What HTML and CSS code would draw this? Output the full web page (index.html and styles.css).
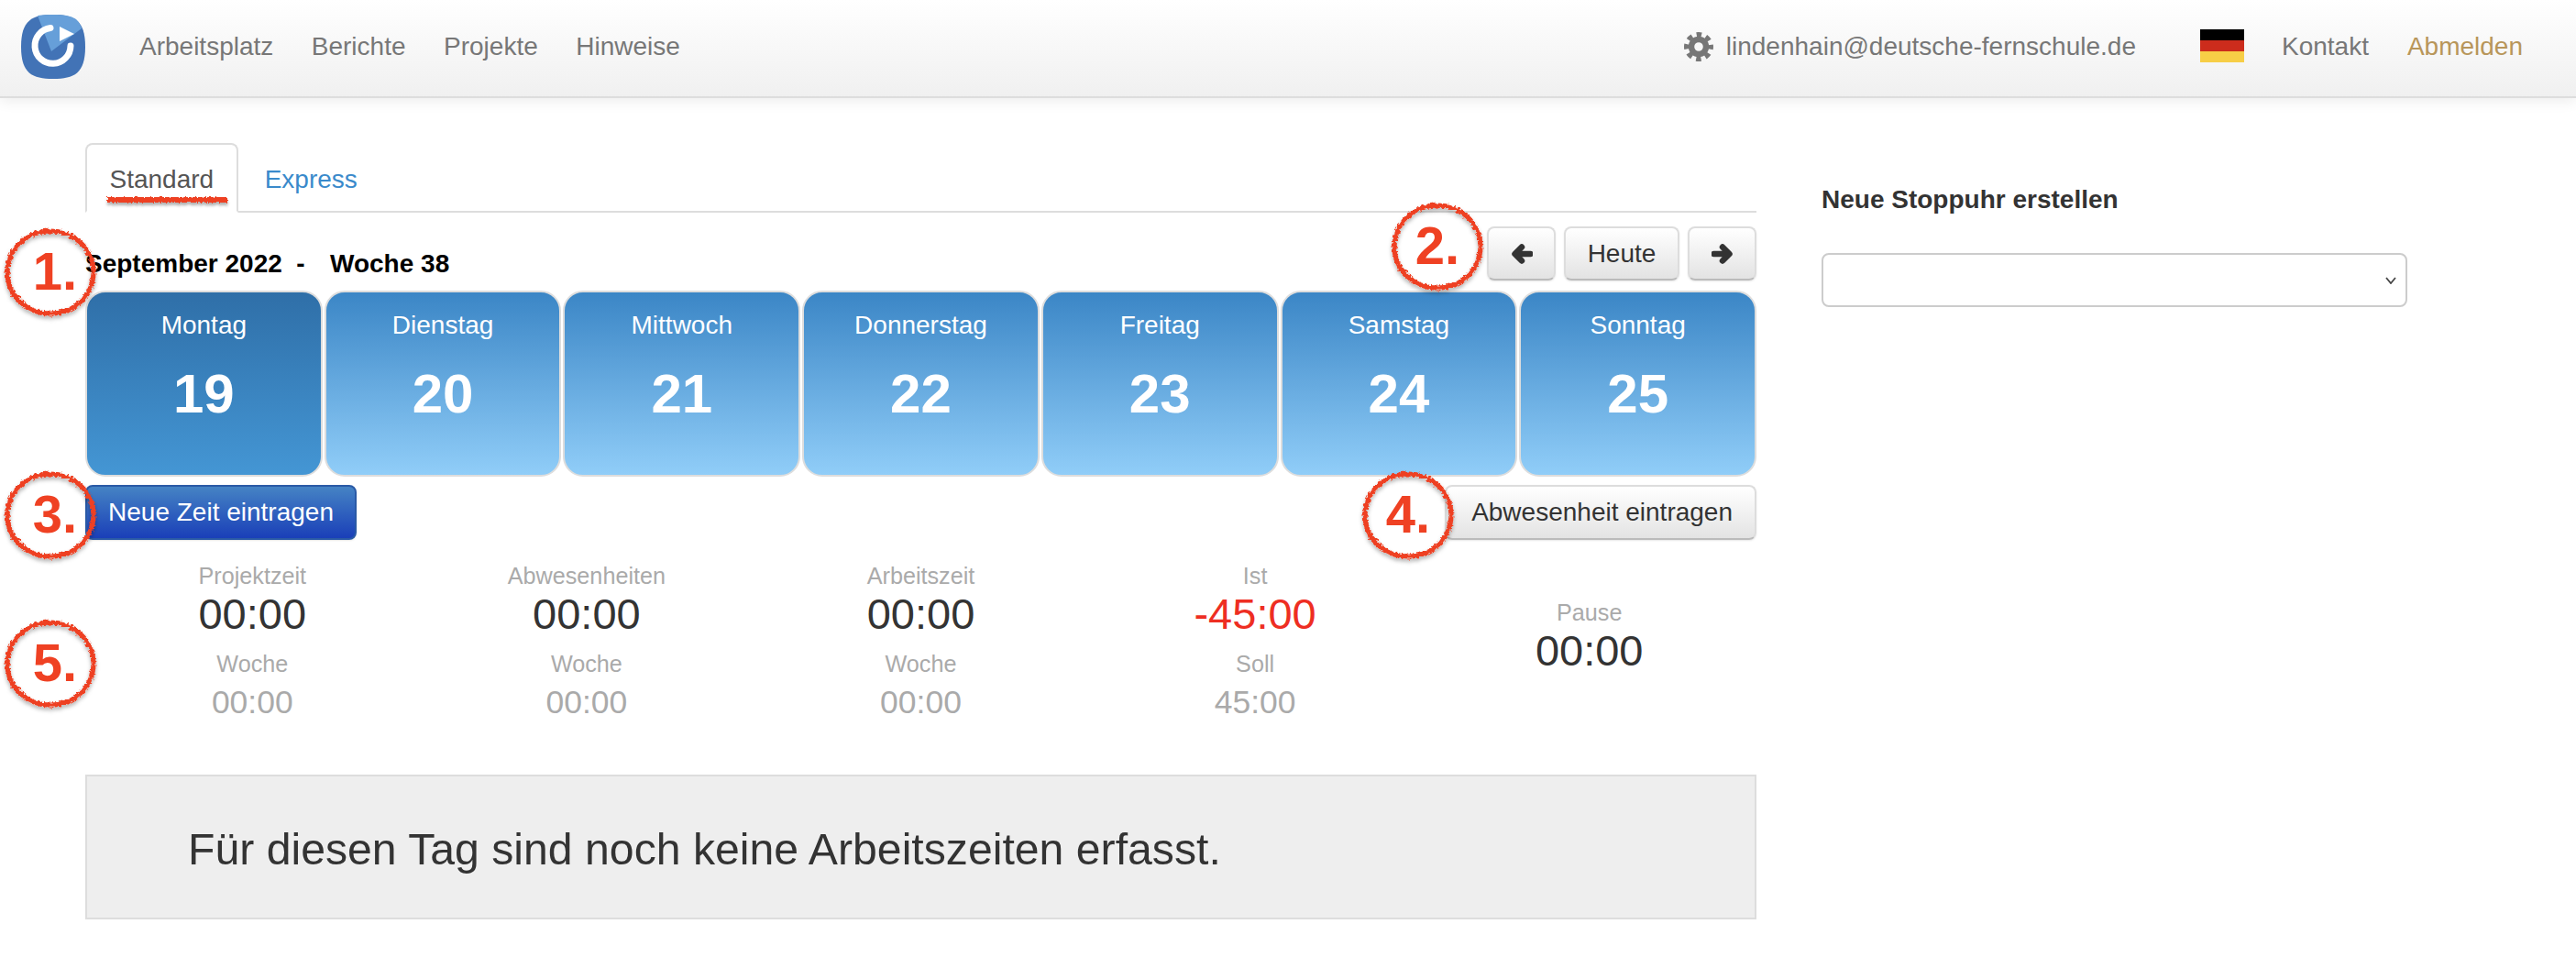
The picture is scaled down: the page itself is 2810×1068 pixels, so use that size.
FILE: index.html
```html
<!DOCTYPE html>
<html lang="de">
<head>
<meta charset="utf-8">
<title>Arbeitsplatz</title>
<link rel="stylesheet" href="styles.css">
</head>
<body>
<svg class="defs" width="0" height="0" aria-hidden="true">
  <defs>
    <filter id="rough" x="-20%" y="-20%" width="140%" height="150%">
      <feTurbulence type="fractalNoise" baseFrequency="0.35" numOctaves="3" seed="4" result="n"/>
      <feDisplacementMap in="SourceGraphic" in2="n" scale="5" xChannelSelector="R" yChannelSelector="G" result="d"/>
      <feDropShadow in="d" dx="0" dy="3" stdDeviation="2" flood-color="#000" flood-opacity="0.3"/>
    </filter>
    <filter id="roughline" filterUnits="userSpaceOnUse" x="-10" y="-10" width="160" height="34">
      <feTurbulence type="fractalNoise" baseFrequency="0.5" numOctaves="3" seed="7" result="n"/>
      <feDisplacementMap in="SourceGraphic" in2="n" scale="4" xChannelSelector="R" yChannelSelector="G" result="d"/>
      <feDropShadow in="d" dx="0" dy="3" stdDeviation="1.5" flood-color="#000" flood-opacity="0.3"/>
    </filter>
  </defs>
</svg>
<header class="topbar">
  <svg class="logo" viewBox="0 0 70 70" width="70" height="70">
    <path d="M35 0C58 0 70 6 70 35S58 70 35 70 0 64 0 35 12 0 35 0Z" fill="#4273b6"/>
    <path d="M18 1C24 0 29 0 35 0 46 0 54 1 60 5 63 8 65 11 66 15L33 40Z" fill="#669fd9"/>
    <path d="M32 14.5A19.5 19.5 0 1 0 54 34" fill="none" stroke="#fff" stroke-width="7" stroke-linecap="round"/>
    <path d="M42 13L58 21 42 29Z" fill="#fff"/>
  </svg>
  <nav class="mainnav">
    <a class="navlink">Arbeitsplatz</a>
    <a class="navlink">Berichte</a>
    <a class="navlink">Projekte</a>
    <a class="navlink">Hinweise</a>
  </nav>
  <div class="usernav">
    <svg class="gear" viewBox="0 0 32 32" width="32" height="32">
      <circle cx="16" cy="16" r="8" fill="none" stroke="#777" stroke-width="6.4"/>
      <circle class="gearteeth" cx="16" cy="16" r="13.4" fill="none" stroke="#777" stroke-width="5.2"/>
    </svg>
    <a class="navlink email">lindenhain@deutsche-fernschule.de</a>
    <span class="flag"><i class="fb"></i><i class="fr"></i><i class="fy"></i></span>
    <a class="navlink kontakt">Kontakt</a>
    <a class="navlink logout">Abmelden</a>
  </div>
</header>

<main class="page">
  <section class="leftcol">
    <div class="tabs">
      <a class="tab active">Standard</a>
      <a class="tab">Express</a>
    </div>
    <div class="weekrow">
      <h2 class="weektitle">September 2022&nbsp; <span class="dash">-</span>&nbsp;&nbsp; Woche 38</h2>
      <div class="weekbtns">
        <button class="btn btn-icon"><svg viewBox="0 0 24 24" width="24" height="24"><path class="arrow" d="M12 4.5L4.5 12 12 19.5M5 12H21.5"/></svg></button>
        <button class="btn btn-today">Heute</button>
        <button class="btn btn-icon"><svg viewBox="0 0 24 24" width="24" height="24"><path class="arrow" d="M12 4.5L19.5 12 12 19.5M19 12H2.5"/></svg></button>
      </div>
    </div>
    <div class="days">
      <div class="day current"><span class="dayname">Montag</span><span class="daynum">19</span></div>
      <div class="day"><span class="dayname">Dienstag</span><span class="daynum">20</span></div>
      <div class="day"><span class="dayname">Mittwoch</span><span class="daynum">21</span></div>
      <div class="day"><span class="dayname">Donnerstag</span><span class="daynum">22</span></div>
      <div class="day"><span class="dayname">Freitag</span><span class="daynum">23</span></div>
      <div class="day"><span class="dayname">Samstag</span><span class="daynum">24</span></div>
      <div class="day"><span class="dayname">Sonntag</span><span class="daynum">25</span></div>
    </div>
    <div class="actions">
      <button class="btn btn-primary">Neue Zeit eintragen</button>
      <button class="btn btn-absence">Abwesenheit eintragen</button>
    </div>
    <div class="stats">
      <div class="stat"><span class="label">Projektzeit</span><span class="value">00:00</span><span class="label sub">Woche</span><span class="value small">00:00</span></div>
      <div class="stat"><span class="label">Abwesenheiten</span><span class="value">00:00</span><span class="label sub">Woche</span><span class="value small">00:00</span></div>
      <div class="stat"><span class="label">Arbeitszeit</span><span class="value">00:00</span><span class="label sub">Woche</span><span class="value small">00:00</span></div>
      <div class="stat"><span class="label">Ist</span><span class="value negative">-45:00</span><span class="label sub">Soll</span><span class="value small">45:00</span></div>
      <div class="stat pause"><span class="label">Pause</span><span class="value">00:00</span></div>
    </div>
    <div class="notice">Für diesen Tag sind noch keine Arbeitszeiten erfasst.</div>
  </section>
  <aside class="rightcol">
    <h3 class="sidetitle">Neue Stoppuhr erstellen</h3>
    <div class="selectbox">
      <svg viewBox="0 0 12 8" width="12" height="8"><path d="M1 1L6 7 11 1" fill="none" stroke="#444" stroke-width="1.8"/></svg>
    </div>
  </aside>

  <svg class="underline" viewBox="0 0 135 14" width="135" height="14"><rect x="2" y="3" width="131" height="6" fill="#ee4023" filter="url(#roughline)"/></svg>
  <div class="mark m1 leftmark"><svg viewBox="0 0 100 100" width="100" height="100"><ellipse cx="50" cy="49" rx="47" ry="45" class="ring" filter="url(#rough)"/></svg><span class="marknum">1.</span></div>
  <div class="mark m2"><svg viewBox="0 0 100 100" width="100" height="100"><ellipse cx="50" cy="49" rx="47" ry="45" class="ring" filter="url(#rough)"/></svg><span class="marknum">2.</span></div>
  <div class="mark m3 leftmark"><svg viewBox="0 0 100 100" width="100" height="100"><ellipse cx="50" cy="49" rx="47" ry="45" class="ring" filter="url(#rough)"/></svg><span class="marknum">3.</span></div>
  <div class="mark m4"><svg viewBox="0 0 100 100" width="100" height="100"><ellipse cx="50" cy="49" rx="47" ry="45" class="ring" filter="url(#rough)"/></svg><span class="marknum">4.</span></div>
  <div class="mark m5 leftmark"><svg viewBox="0 0 100 100" width="100" height="100"><ellipse cx="50" cy="49" rx="47" ry="45" class="ring" filter="url(#rough)"/></svg><span class="marknum">5.</span></div>
</main>
</body>
</html>
```
FILE: styles.css
```css
* { box-sizing: border-box; }
html, body { margin: 0; padding: 0; background: #fff; }
body {
  font-family: "Liberation Sans", Arial, sans-serif;
  font-size: 28px;
  line-height: 40px;
  color: #333;
  height: 1068px;
  overflow: hidden;
}
.defs { position: absolute; }

/* top bar */
.topbar {
  height: 107px;
  display: flex;
  align-items: center;
  padding: 0 58px 3px 23px;
  background: linear-gradient(#fff, #f0f0f0);
  border-bottom: 2px solid #ddd;
  box-shadow: 0 4px 14px rgba(0, 0, 0, 0.07);
  position: relative;
}
.logo { flex: none; }
.mainnav { display: flex; gap: 41.5px; margin-left: 59px; }
.navlink { color: #777; white-space: nowrap; }
.usernav { margin-left: auto; display: flex; align-items: center; }
.gear { flex: none; }
.gearteeth { stroke-dasharray: 5.5 5.02; stroke-dashoffset: 2.75; }
.email { margin-left: 14px; }
.flag { display: flex; flex-direction: column; width: 48px; height: 36px; margin: -2px 0 0 70px; }
.flag i { flex: 1; }
.fb { background: #000; }
.fr { background: #cc2c1c; }
.fy { background: #f7ce46; }
.kontakt { margin-left: 41px; }
.logout { margin-left: 42px; color: #b8965a; }

/* page layout */
.page { position: relative; display: flex; padding: 49px 0 0 93px; }
.leftcol { width: 1823px; flex: none; }
.rightcol { width: 639px; flex: none; margin-left: 71px; padding-top: 42px; }

/* tabs */
.tabs { display: flex; height: 76px; border-bottom: 2px solid #ddd; }
.tab {
  height: 76px;
  padding: 18px 24.5px 0;
  border: 2px solid transparent;
  border-radius: 8px 8px 0 0;
  color: #3a8acb;
}
.tab.active { color: #555; border-color: #ddd; border-bottom-color: #fff; background: #fff; }
.tab + .tab { padding-left: 27px; }

/* week header */
.weekrow { display: flex; justify-content: space-between; align-items: flex-end; margin-top: 15px; }
.weektitle { margin: 0; font-size: 28px; line-height: 36px; font-weight: 700; color: #000; white-space: nowrap; }
.dash { margin-right: 4px; }
.weekbtns { display: flex; gap: 9px; }

/* buttons */
.btn {
  font-family: inherit;
  font-size: 28px;
  line-height: 40px;
  color: #333;
  height: 59px;
  padding: 0;
  border: 2px solid #ddd;
  border-bottom-color: #bbb;
  border-radius: 8px;
  background: linear-gradient(#fff, #e3e3e3);
  box-shadow: 0 1px 2px rgba(0, 0, 0, 0.1);
}
.btn svg { display: block; margin: 0 auto; }
.btn-icon { width: 75px; }
.btn-today { width: 126px; }
.arrow { fill: none; stroke: #333; stroke-width: 6.5; stroke-linejoin: round; stroke-linecap: round; }
.btn-primary {
  width: 296px;
  height: 60px;
  color: #fff;
  border: 2px solid #2a5aa6;
  background: linear-gradient(#4583c4, #1a3fb8);
}
.btn-absence { width: 340px; height: 60px; text-align: right; padding-right: 24px; }

/* day cards */
.days { display: grid; grid-template-columns: repeat(7, 1fr); gap: 2px; margin-top: 11px; height: 203px; }
.day {
  display: flex;
  flex-direction: column;
  align-items: center;
  color: #fff;
  border: 2px solid #ddd;
  border-radius: 22px;
  padding-top: 16px;
  background: linear-gradient(#3b86c6, #90cdf8);
}
.day.current { background: linear-gradient(#2f6fa8, #4496d4); }
.dayname { line-height: 40px; }
.daynum { font-size: 60px; line-height: 70px; font-weight: 700; margin-top: 20px; }

.actions { display: flex; justify-content: space-between; margin-top: 9px; }

/* stats */
.stats { display: grid; grid-template-columns: repeat(5, 1fr); margin-top: 23px; }
.stat { display: flex; flex-direction: column; align-items: center; }
.stat.pause { padding-top: 40px; }
.label { font-size: 25.2px; line-height: 33px; color: #aaa; }
.label.sub { margin-top: 13px; }
.value { font-size: 47px; line-height: 50px; color: #333; }
.value.small { font-size: 35.5px; color: #aaa; }
.value.negative { color: #ee2e22; }

/* notice */
.notice {
  margin-top: 54px;
  height: 158px;
  display: flex;
  align-items: center;
  padding: 3px 0 0 110px;
  font-size: 48.2px;
  color: #333;
  background: #eee;
  border: 2px solid #ddd;
}

/* sidebar */
.sidetitle { margin: 0; font-size: 28px; line-height: 40px; font-weight: 700; color: #333; }
.selectbox {
  margin-top: 38px;
  height: 59px;
  display: flex;
  align-items: center;
  justify-content: flex-end;
  padding-right: 10px;
  border: 2px solid #ccc;
  border-radius: 8px;
  background: #fff;
}

/* annotations */
.underline { position: absolute; left: 115px; top: 105px; overflow: visible; }
.mark { position: absolute; width: 100px; height: 100px; display: flex; align-items: center; justify-content: center; }
.mark svg { position: absolute; left: 0; top: 0; overflow: visible; }
.ring { fill: none; stroke: #ee4023; stroke-width: 5; }
.marknum { position: relative; font-size: 58px; line-height: 60px; font-weight: 700; color: #ef4123; margin-top: -5px; }
.leftmark .marknum { margin-left: 10px; }
.m1 { left: 5px; top: 141px; }
.m2 { left: 1518px; top: 113px; }
.m3 { left: 5px; top: 406px; }
.m4 { left: 1486px; top: 406px; }
.m5 { left: 5px; top: 568px; }
```
